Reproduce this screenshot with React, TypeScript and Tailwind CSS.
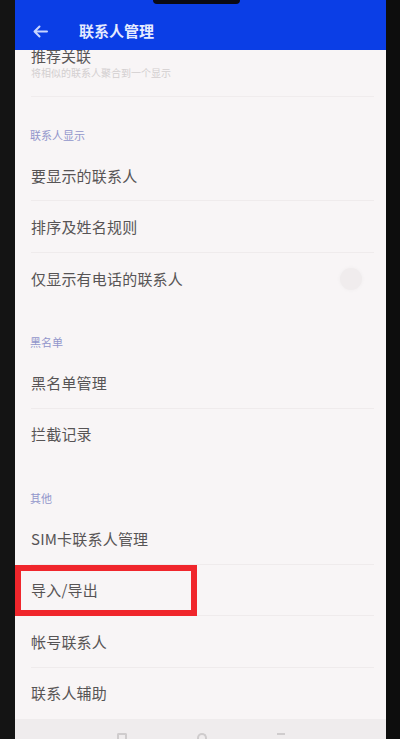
import React from "react";

const font = { fontFamily: '"Noto Sans CJK SC", "Noto Sans", sans-serif' };

function Row({ text, toggle, last }: { text: string; toggle?: boolean; last?: boolean }) {
  return (
    <div className="relative h-[51.5px] flex items-center pl-[16px] pr-[12px]">
      <span className="text-[15px] leading-[20px] text-[#575455] tracking-[0.2px]">{text}</span>
      {toggle && (
        <div className="ml-auto mr-[12px] w-[22px] h-[22px] rounded-full bg-[#f0eced] shadow-[0_0_4px_rgba(0,0,0,0.04)]" />
      )}
      {!last && <div className="absolute bottom-0 left-[16px] right-[12px] h-px bg-[#efebec]" />}
    </div>
  );
}

function Section({ label }: { label: string }) {
  return (
    <div className="h-[53px] pl-[15px] pt-[24px]">
      <span className="text-[11px] leading-[14px] text-[#9296cb]">{label}</span>
    </div>
  );
}

export default function App() {
  return (
    <div className="w-[400px] h-[739px] bg-[#0d0d0d] flex overflow-hidden relative" style={font}>
      <div className="w-[15px] bg-[#141414]" />
      <div className="flex-1 flex flex-col bg-[#f8f5f6] overflow-hidden relative">
        <div className="h-[50px] shrink-0 bg-[#0b3ee6] flex items-center pt-[12px] pl-[18px] z-10">
          <svg width="15" height="13" viewBox="0 0 15 13" fill="none" stroke="#c9d6ff" strokeWidth="2" strokeLinecap="round" strokeLinejoin="round">
            <path d="M14 6.5H1.5M6.5 1.5L1.5 6.5L6.5 11.5" />
          </svg>
          <span className="ml-[31px] text-[15px] leading-[20px] font-bold text-[#e6ebff]">联系人管理</span>
        </div>
        <div className="h-[47px] shrink-0 pl-[16px] relative">
          <div className="-mt-[4px] text-[15px] leading-[20px] text-[#575455]">推荐关联</div>
          <div className="mt-[1px] text-[10px] leading-[12px] text-[#d3cfd0]">将相似的联系人聚合到一个显示</div>
          <div className="absolute bottom-0 left-[16px] right-[12px] h-px bg-[#f0eced]" />
        </div>
        <Section label="联系人显示" />
        <Row text="要显示的联系人" />
        <Row text="排序及姓名规则" />
        <Row text="仅显示有电话的联系人" toggle last />
        <Section label="黑名单" />
        <Row text="黑名单管理" />
        <Row text="拦截记录" last />
        <Section label="其他" />
        <Row text="SIM卡联系人管理" />
        <Row text="导入/导出" />
        <Row text="帐号联系人" />
        <Row text="联系人辅助" last />
        <div className="flex-1 bg-[#efeced] flex justify-center gap-[70px] pt-[14px]">
          <div className="w-[10px] h-[6px] border-t-[2px] border-x-[2px] border-[#cfcccd] rounded-t-[2px]" />
          <div className="w-[10px] h-[6px] border-t-[2px] border-x-[2px] border-[#cfcccd] rounded-t-full" />
          <div className="w-[8px] h-[6px] border-t-[2px] border-[#cfcccd]" />
        </div>
        <div className="absolute left-0 top-[565px] w-[182px] h-[51px] border-[6px] border-[#f0262c] z-20" />
      </div>
      <div className="w-[14px] bg-[#0d0d0d]" />
      <div className="absolute left-[153px] top-0 w-[87px] h-[4px] bg-[#0a0a14] rounded-b-[6px] z-30" />
    </div>
  );
}
